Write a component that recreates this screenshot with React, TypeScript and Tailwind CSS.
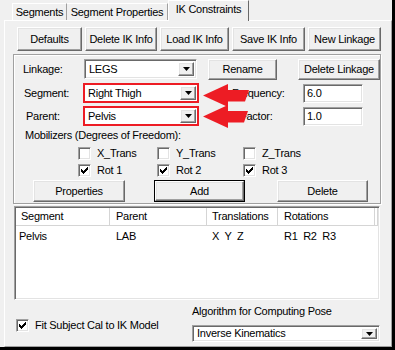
import React from 'react';

const raised =
  'bg-[#f0f0f0] border border-t-white border-l-white border-r-[#696969] border-b-[#696969] shadow-[inset_-1px_-1px_0_#a0a0a0,inset_1px_1px_0_#e3e3e3]';
const sunken =
  'bg-white border border-t-[#a0a0a0] border-l-[#a0a0a0] border-r-white border-b-white shadow-[inset_1px_1px_0_#696969,inset_-1px_-1px_0_#e3e3e3]';

function Btn({ label, className }: { label: string; className: string }) {
  return <div className={`flex items-center justify-center shrink-0 ${raised} ${className}`}>{label}</div>;
}

function DropArrow() {
  return (
    <div className={`w-[16px] h-full shrink-0 flex items-center justify-center ${raised}`}>
      <svg width="7" height="4" viewBox="0 0 7 4">
        <path d="M0 0H7L3.5 4Z" fill="#000" />
      </svg>
    </div>
  );
}

function Combo({ value, className, red }: { value: string; className: string; red?: boolean }) {
  const frame = red ? 'bg-white border-2 border-[#ed1c24] p-px' : `${sunken} p-[2px]`;
  return (
    <div className={`flex shrink-0 ${frame} ${className}`}>
      <span className="flex-1 self-center pl-[2px] whitespace-nowrap overflow-hidden">{value}</span>
      <DropArrow />
    </div>
  );
}

function Check({ label, on, className }: { label: string; on?: boolean; className: string }) {
  return (
    <div className={`flex items-center gap-[6px] shrink-0 ${className}`}>
      <div className={`w-[13px] h-[13px] flex items-center justify-center ${sunken}`}>
        {on && (
          <svg width="9" height="9" viewBox="0 0 9 9" shapeRendering="crispEdges">
            <path d="M1 3H2V4H3V5H4V4H5V3H6V2H7V1H8V4H7V5H6V6H5V7H4V8H3V7H2V6H1Z" fill="#000" />
          </svg>
        )}
      </div>
      <span className="whitespace-nowrap">{label}</span>
    </div>
  );
}

const columns = [
  { title: 'Segment', w: 'w-[94px]', pad: 'pl-[5px]', cell: 'pl-[3px]', value: 'Pelvis' },
  { title: 'Parent', w: 'w-[97px]', pad: 'pl-[6px]', cell: 'pl-[6px]', value: 'LAB' },
  { title: 'Translations', w: 'w-[71px]', pad: 'pl-[5px]', cell: 'pl-[5px]', value: 'X  Y  Z' },
  { title: 'Rotations', w: 'w-[97px]', pad: 'pl-[6px]', cell: 'pl-[6px]', value: 'R1  R2  R3' },
];

export default function App() {
  return (
    <div className="relative w-[395px] h-[350px] overflow-hidden bg-[#f0f0f0] border-r-[3px] border-b-[3px] border-black font-['Liberation_Sans',Arial,sans-serif] text-[11px] leading-[13px] tracking-[-0.25px] text-black">
      {/* Tabs */}
      <div className="flex items-end h-[20px] pl-[12px]">
        <div className="w-[55px] h-[17px] flex items-center justify-center border-t border-l border-t-white border-l-white border-r border-r-[#a0a0a0]">
          Segments
        </div>
        <div className="w-[101px] h-[17px] flex items-center justify-center border-t border-t-white border-r border-r-[#a0a0a0]">
          Segment Properties
        </div>
        <div className="relative z-10 -mb-px w-[81px] h-[21px] pb-[3px] flex items-center justify-center bg-[#f0f0f0] border-t border-l border-t-white border-l-white border-r border-r-[#696969]">
          IK Constraints
        </div>
      </div>

      {/* Tab panel */}
      <div className="ml-[4px] w-[388px] h-[327px] flex flex-col border border-t-white border-l-white border-r-[#a0a0a0] border-b-[#a0a0a0]">
        {/* Top buttons */}
        <div className="flex gap-[3px] mt-[6px] pl-[12px]">
          <Btn label="Defaults" className="w-[65px] h-[24px]" />
          <Btn label="Delete IK Info" className="w-[72px] h-[24px]" />
          <Btn label="Load IK Info" className="w-[69px] h-[24px]" />
          <Btn label="Save IK Info" className="w-[73px] h-[24px]" />
          <Btn label="New Linkage" className="w-[73px] h-[24px]" />
        </div>

        {/* Linkage group */}
        <div className="mt-[3px] ml-[8px] w-[368px] h-[150px] flex flex-col border border-[#a0a0a0] shadow-[inset_1px_1px_0_#fff,1px_1px_0_#fff]">
          <div className="flex items-start mt-[4px] h-[21px]">
            <span className="w-[70px] pl-[9px] self-center">Linkage:</span>
            <Combo value="LEGS" className="w-[113px] h-[20px]" />
            <Btn label="Rename" className="ml-[11px] w-[69px] h-[21px]" />
            <Btn label="Delete Linkage" className="ml-[21px] w-[82px] h-[21px]" />
          </div>
          <div className="flex items-center mt-[3px] h-[20px]">
            <span className="w-[69px] pl-[10px]">Segment:</span>
            <Combo value="Right Thigh" red className="w-[116px] h-[20px]" />
            <span className="ml-[33px] w-[71px] whitespace-nowrap">Frequency:</span>
            <div className={`w-[60px] h-[19px] pl-[3px] flex items-center ${sunken}`}>6.0</div>
          </div>
          <div className="flex items-center mt-[3px] h-[20px]">
            <span className="w-[69px] pl-[12px]">Parent:</span>
            <Combo value="Pelvis" red className="w-[116px] h-[20px]" />
            <span className="ml-[41px] w-[63px] whitespace-nowrap">Factor:</span>
            <div className={`w-[60px] h-[19px] pl-[3px] flex items-center ${sunken}`}>1.0</div>
          </div>
          <div className="mt-[3px] h-[12px] pl-[11px] leading-[12px]">Mobilizers (Degrees of Freedom):</div>
          <div className="flex mt-[6px] pl-[64px] h-[13px]">
            <Check label="X_Trans" className="w-[79px]" />
            <Check label="Y_Trans" className="w-[86px]" />
            <Check label="Z_Trans" className="w-[80px]" />
          </div>
          <div className="flex mt-[4px] pl-[64px] h-[13px]">
            <Check label="Rot 1" on className="w-[79px]" />
            <Check label="Rot 2" on className="w-[86px]" />
            <Check label="Rot 3" on className="w-[80px]" />
          </div>
          <div className="flex mt-[3px] pl-[19px] h-[22px]">
            <Btn label="Properties" className="w-[92px] h-[22px]" />
            <div className="ml-[29px] w-[91px] h-[22px] border border-black flex">
              <Btn label="Add" className="w-full h-full" />
            </div>
            <Btn label="Delete" className="ml-[32px] w-[91px] h-[22px]" />
          </div>
        </div>

        {/* Linkage list */}
        <div className={`mt-[2px] ml-[9px] w-[366px] h-[94px] p-[1px] ${sunken}`}>
          <div className="flex h-[18px] bg-white border-b border-b-[#d5d5d5]">
            {columns.map((c) => (
              <div key={c.title} className={`${c.w} ${c.pad} flex items-center border-r border-r-[#d5d5d5] whitespace-nowrap`}>
                {c.title}
              </div>
            ))}
            <div className="w-[3px] border-r border-r-[#d5d5d5]" />
          </div>
          <div className="flex mt-[3px] h-[14px] items-center">
            {columns.map((c) => (
              <div key={c.title} className={`${c.w} ${c.cell} whitespace-pre`}>
                {c.value}
              </div>
            ))}
          </div>
        </div>

        {/* Bottom */}
        <div className="flex">
          <div className="w-[187px] pl-[11px] pt-[19px]">
            <Check label="Fit Subject Cal to IK Model" on className="" />
          </div>
          <div className="flex flex-col pt-[5px]">
            <span className="whitespace-nowrap">Algorithm for Computing Pose</span>
            <Combo value="Inverse Kinematics" className="mt-[7px] w-[188px] h-[17px]" />
          </div>
        </div>
      </div>

      {/* Red annotation arrows */}
      <svg className="absolute left-0 top-0 pointer-events-none" width="395" height="350" viewBox="0 0 395 350">
        <path d="M203 95.5L228 84V90H249L245 101.5H228V107Z" fill="#ed1c24" />
        <path d="M203 116.5L228 105V111H248L244 122.5H228V128Z" fill="#ed1c24" />
      </svg>
    </div>
  );
}
